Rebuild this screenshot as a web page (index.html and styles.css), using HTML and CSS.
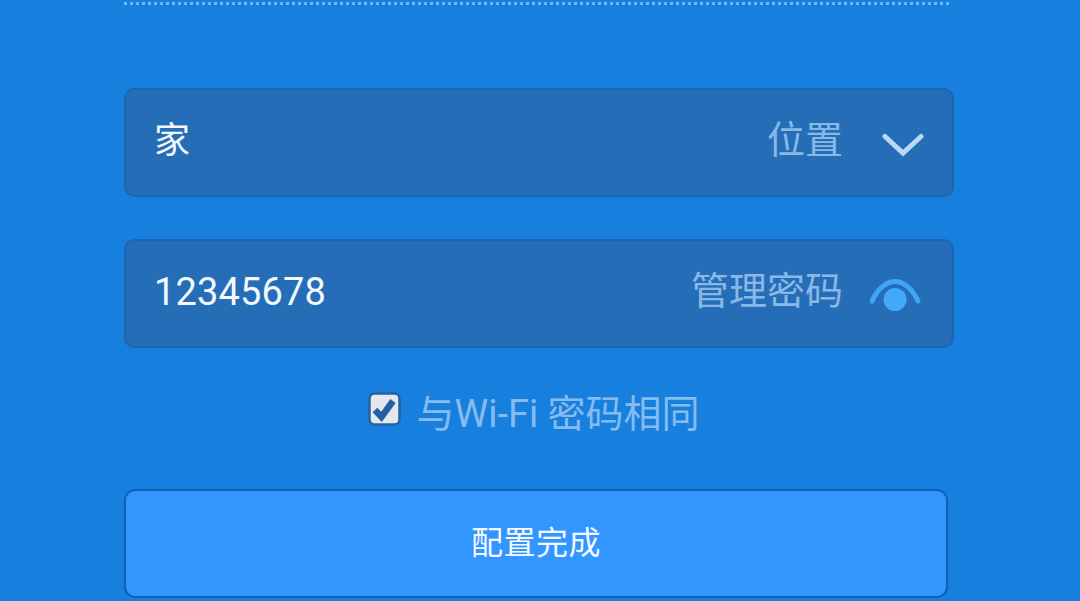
FILE: index.html
```html
<!DOCTYPE html>
<html lang="zh-CN">
<head>
<meta charset="utf-8">
<title>配置</title>
<link rel="stylesheet" href="styles.css">
</head>
<body>
<main class="form">
  <div class="dots"></div>
  <div class="field field-first">
    <span class="value cjk">家</span>
    <span class="label">位置</span>
    <span class="icon">
      <svg width="54" height="28" viewBox="0 0 54 28"><path class="chev" d="M15 7.5 L33 24 L51 7.5"/></svg>
    </span>
  </div>
  <div class="field field-second">
    <span class="value">12345678</span>
    <span class="label">管理密码</span>
    <span class="icon">
      <svg width="54" height="36" viewBox="0 0 54 36"><path class="eye-arc" d="M2 25 C8 12 17 5.5 25 5.5 C33 5.5 42 12 48 25"/><circle class="eye-ball" cx="25" cy="23.5" r="11.5"/></svg>
    </span>
  </div>
  <div class="same">
    <svg class="check" width="34" height="34" viewBox="0 0 34 34">
      <rect class="check-box" x="1.5" y="1.5" width="30" height="31" rx="5"/>
      <path class="check-mark" d="M7 18 L13.5 25 L25 9"/>
    </svg>
    <span class="same-text">与Wi-Fi 密码相同</span>
  </div>
  <button class="done" type="button">配置完成</button>
</main>
</body>
</html>
```

FILE: styles.css
```css
html, body {
  margin: 0;
  height: 601px;
  overflow: hidden;
}
body {
  background: #1780de;
  font-family: "Roboto", "Noto Sans CJK SC", sans-serif;
}
.form {
  width: 830px;
  margin-left: 124px;
  padding-top: 2px;
  display: flex;
  flex-direction: column;
}
.dots {
  width: 826px;
  height: 3px;
  background-image: linear-gradient(90deg, #78b8ef 0 3px, transparent 3px);
  background-size: 6px 3px;
  background-repeat: repeat-x;
}
.field {
  box-sizing: border-box;
  height: 109px;
  display: flex;
  align-items: center;
  background: #266db8;
  border: 2px solid #1b66b4;
  border-radius: 10px;
  padding: 0 28px;
}
.field-first { margin-top: 83px; }
.field-second { margin-top: 42px; }
.value {
  flex: 1;
  color: #f2f8fd;
  font-size: 38px;
  line-height: 44px;
  letter-spacing: 0.15px;
  padding-bottom: 4px;
}
.value.cjk {
  font-family: "Noto Sans CJK SC", sans-serif;
  font-size: 36px;
  padding-bottom: 12px;
}
.label {
  color: #8ab8e6;
  font-family: "Noto Sans CJK SC", sans-serif;
  font-size: 38px;
  line-height: 44px;
  padding-bottom: 12px;
}
.icon {
  width: 54px;
  margin-left: 27px;
  display: flex;
}
.chev {
  fill: none;
  stroke: #b9d8f3;
  stroke-width: 5;
  stroke-linecap: round;
}
.eye-arc {
  fill: none;
  stroke: #3fa5f5;
  stroke-width: 5;
  stroke-linecap: round;
}
.eye-ball { fill: #42a9f8; }
.same {
  margin-top: 42px;
  height: 48px;
  display: flex;
  align-items: center;
  justify-content: center;
  gap: 14px;
  padding-right: 10px;
}
.check { margin-top: -10px; }
.check-box {
  fill: #e3e8ef;
  stroke: #27619f;
  stroke-width: 2.5;
}
.check-mark {
  fill: none;
  stroke: #24609f;
  stroke-width: 6.5;
}
.same-text {
  color: #86bbee;
  font-size: 38px;
  line-height: 48px;
}
.done {
  box-sizing: border-box;
  width: 824px;
  height: 109px;
  margin-top: 51px;
  background: #3396ff;
  border: 2.5px solid #0f62b4;
  border-radius: 11px;
  color: #f4f9ff;
  font-family: "Noto Sans CJK SC", sans-serif;
  font-size: 32px;
  letter-spacing: 0.5px;
  padding: 0 0 8px;
}
```
